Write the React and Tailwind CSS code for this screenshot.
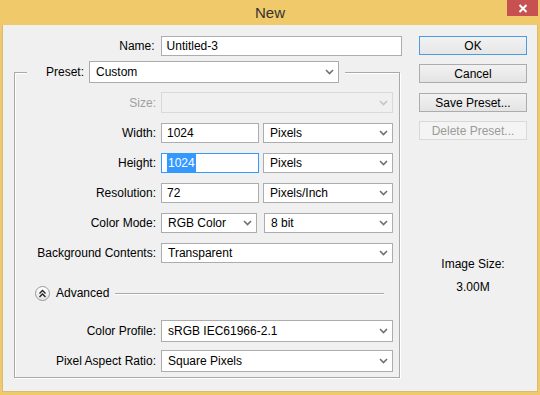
import React from "react";

const Chevron = ({ disabled }) => (
  <svg width="9" height="6" viewBox="0 0 9 6" className="shrink-0">
    <polyline
      points="1,1 4.5,4.5 8,1"
      fill="none"
      stroke={disabled ? "#c4c4c4" : "#707070"}
      strokeWidth="1.6"
    />
  </svg>
);

const Select = ({ value, className, disabled }) => (
  <div
    className={
      "flex items-center justify-between border pl-[6px] pr-[4px] " +
      (disabled ? "bg-[#f0f0f0] border-[#d9d9d9] " : "bg-white border-[#acacac] ") +
      className
    }
  >
    <span>{value}</span>
    <Chevron disabled={disabled} />
  </div>
);

const Input = ({ children, className }) => (
  <div className={"flex items-center bg-white border pl-[5px] " + className}>{children}</div>
);

const Row = ({ label, children, className, labelClass }) => (
  <div className={"flex items-center " + className}>
    <div className={"w-[141px] text-right " + (labelClass || "")}>{label}</div>
    <div className="ml-[5px] flex">{children}</div>
  </div>
);

const Button = ({ children, className }) => (
  <div
    className={
      "h-[19px] flex items-center justify-center border bg-gradient-to-b " + className
    }
  >
    {children}
  </div>
);

export default function App() {
  return (
    <div className="w-[540px] h-[395px] bg-[#f0c96b] flex flex-col font-['Liberation_Sans',Arial,sans-serif] text-[12px] text-black">
      {/* title bar */}
      <div className="h-[25px] shrink-0 grid grid-cols-[1fr_auto_1fr]">
        <div />
        <div className="text-[15px] leading-[25px] text-[#333]">New</div>
        <div className="flex justify-end pr-[2px]">
          <div className="w-[31px] h-[16px] bg-[#c75050] flex items-center justify-center">
            <svg width="10" height="9" viewBox="0 0 10 9">
              <path d="M1.5 1 L8.5 8 M8.5 1 L1.5 8" stroke="#fff" strokeWidth="2" />
            </svg>
          </div>
        </div>
      </div>

      <div className="flex-1 mx-[2px] mb-[3px] bg-[#f0f0f0] border-x border-b border-[#d8bc76] flex">
        {/* left column */}
        <div className="w-[399px] pt-[11px] flex flex-col">
          <div className="flex items-center h-[20px]">
            <div className="w-[152px] text-right">Name:</div>
            <Input className="ml-[6px] w-[242px] h-[20px] border-[#abadb3]">Untitled-3</Input>
          </div>

          <div className="mt-[16px] ml-[11px] w-[386px] border border-[#a9a9a9] shadow-[inset_1px_1px_0_#fff,1px_1px_0_#fff] pb-[5px] flex flex-col">
            <div className="-mt-[12px] ml-[12px] w-fit h-[22px] bg-[#f0f0f0] flex items-center pl-[19px] pr-[6px]">
              <span>Preset:</span>
              <Select value="Custom" className="ml-[5px] w-[250px] h-[22px]" />
            </div>

            <Row label="Size:" labelClass="text-[#a0a0a0]" className="mt-[9px] h-[21px]">
              <Select value="" disabled className="w-[232px] h-[21px]" />
            </Row>
            <Row label="Width:" className="mt-[10px] h-[20px]">
              <Input className="w-[98px] h-[20px] border-[#abadb3]">1024</Input>
              <Select value="Pixels" className="ml-[4px] w-[130px] h-[20px]" />
            </Row>
            <Row label="Height:" className="mt-[10px] h-[20px]">
              <Input className="w-[98px] h-[20px] border-[#3399ff] pl-[4px]">
                <span className="bg-[#3399ff] text-white px-[1px]">1024</span>
              </Input>
              <Select value="Pixels" className="ml-[4px] w-[130px] h-[20px]" />
            </Row>
            <Row label="Resolution:" className="mt-[10px] h-[20px]">
              <Input className="w-[98px] h-[20px] border-[#abadb3]">72</Input>
              <Select value="Pixels/Inch" className="ml-[4px] w-[130px] h-[20px]" />
            </Row>
            <Row label="Color Mode:" className="mt-[10px] h-[20px]">
              <Select value="RGB Color" className="w-[96px] h-[20px]" />
              <Select value="8 bit" className="ml-[7px] w-[129px] h-[20px]" />
            </Row>
            <Row label="Background Contents:" className="mt-[10px] h-[20px]">
              <Select value="Transparent" className="w-[232px] h-[20px]" />
            </Row>

            <div className="mt-[23px] h-[14px] flex items-center">
              <div className="ml-[20px] w-[15px] h-[15px] rounded-full border border-[#9a9a9a] bg-gradient-to-b from-white to-[#e4e4e4] flex items-center justify-center">
                <svg width="9" height="9" viewBox="0 0 9 9">
                  <polyline points="1.5,4.5 4.5,1.5 7.5,4.5" fill="none" stroke="#222" strokeWidth="1.3" />
                  <polyline points="1.5,8 4.5,5 7.5,8" fill="none" stroke="#222" strokeWidth="1.3" />
                </svg>
              </div>
              <span className="ml-[6px]">Advanced</span>
              <div className="ml-[6px] mr-[15px] flex-1 h-px bg-[#a9a9a9] shadow-[0_1px_0_#fff]" />
            </div>

            <Row label="Color Profile:" className="mt-[20px] h-[22px]">
              <Select value="sRGB IEC61966-2.1" className="w-[232px] h-[22px]" />
            </Row>
            <Row label="Pixel Aspect Ratio:" className="mt-[8px] h-[22px]">
              <Select value="Square Pixels" className="w-[232px] h-[22px]" />
            </Row>
          </div>
        </div>

        {/* right column */}
        <div className="ml-[17px] w-[108px] pt-[11px] flex flex-col">
          <Button className="border-[#4d9be0] from-[#f2f2f2] to-[#e6e6e6]">OK</Button>
          <Button className="mt-[9px] border-[#acacac] from-[#f2f2f2] to-[#e4e4e4]">Cancel</Button>
          <Button className="mt-[10px] border-[#acacac] from-[#f2f2f2] to-[#e4e4e4]">Save Preset...</Button>
          <Button className="mt-[9px] border-[#d9d9d9] from-[#f4f4f4] to-[#f4f4f4] text-[#9a9a9a]">
            Delete Preset...
          </Button>
          <div className="mt-[117px] text-center leading-[14px]">Image Size:</div>
          <div className="mt-[9px] text-center leading-[14px]">3.00M</div>
        </div>
      </div>
    </div>
  );
}
